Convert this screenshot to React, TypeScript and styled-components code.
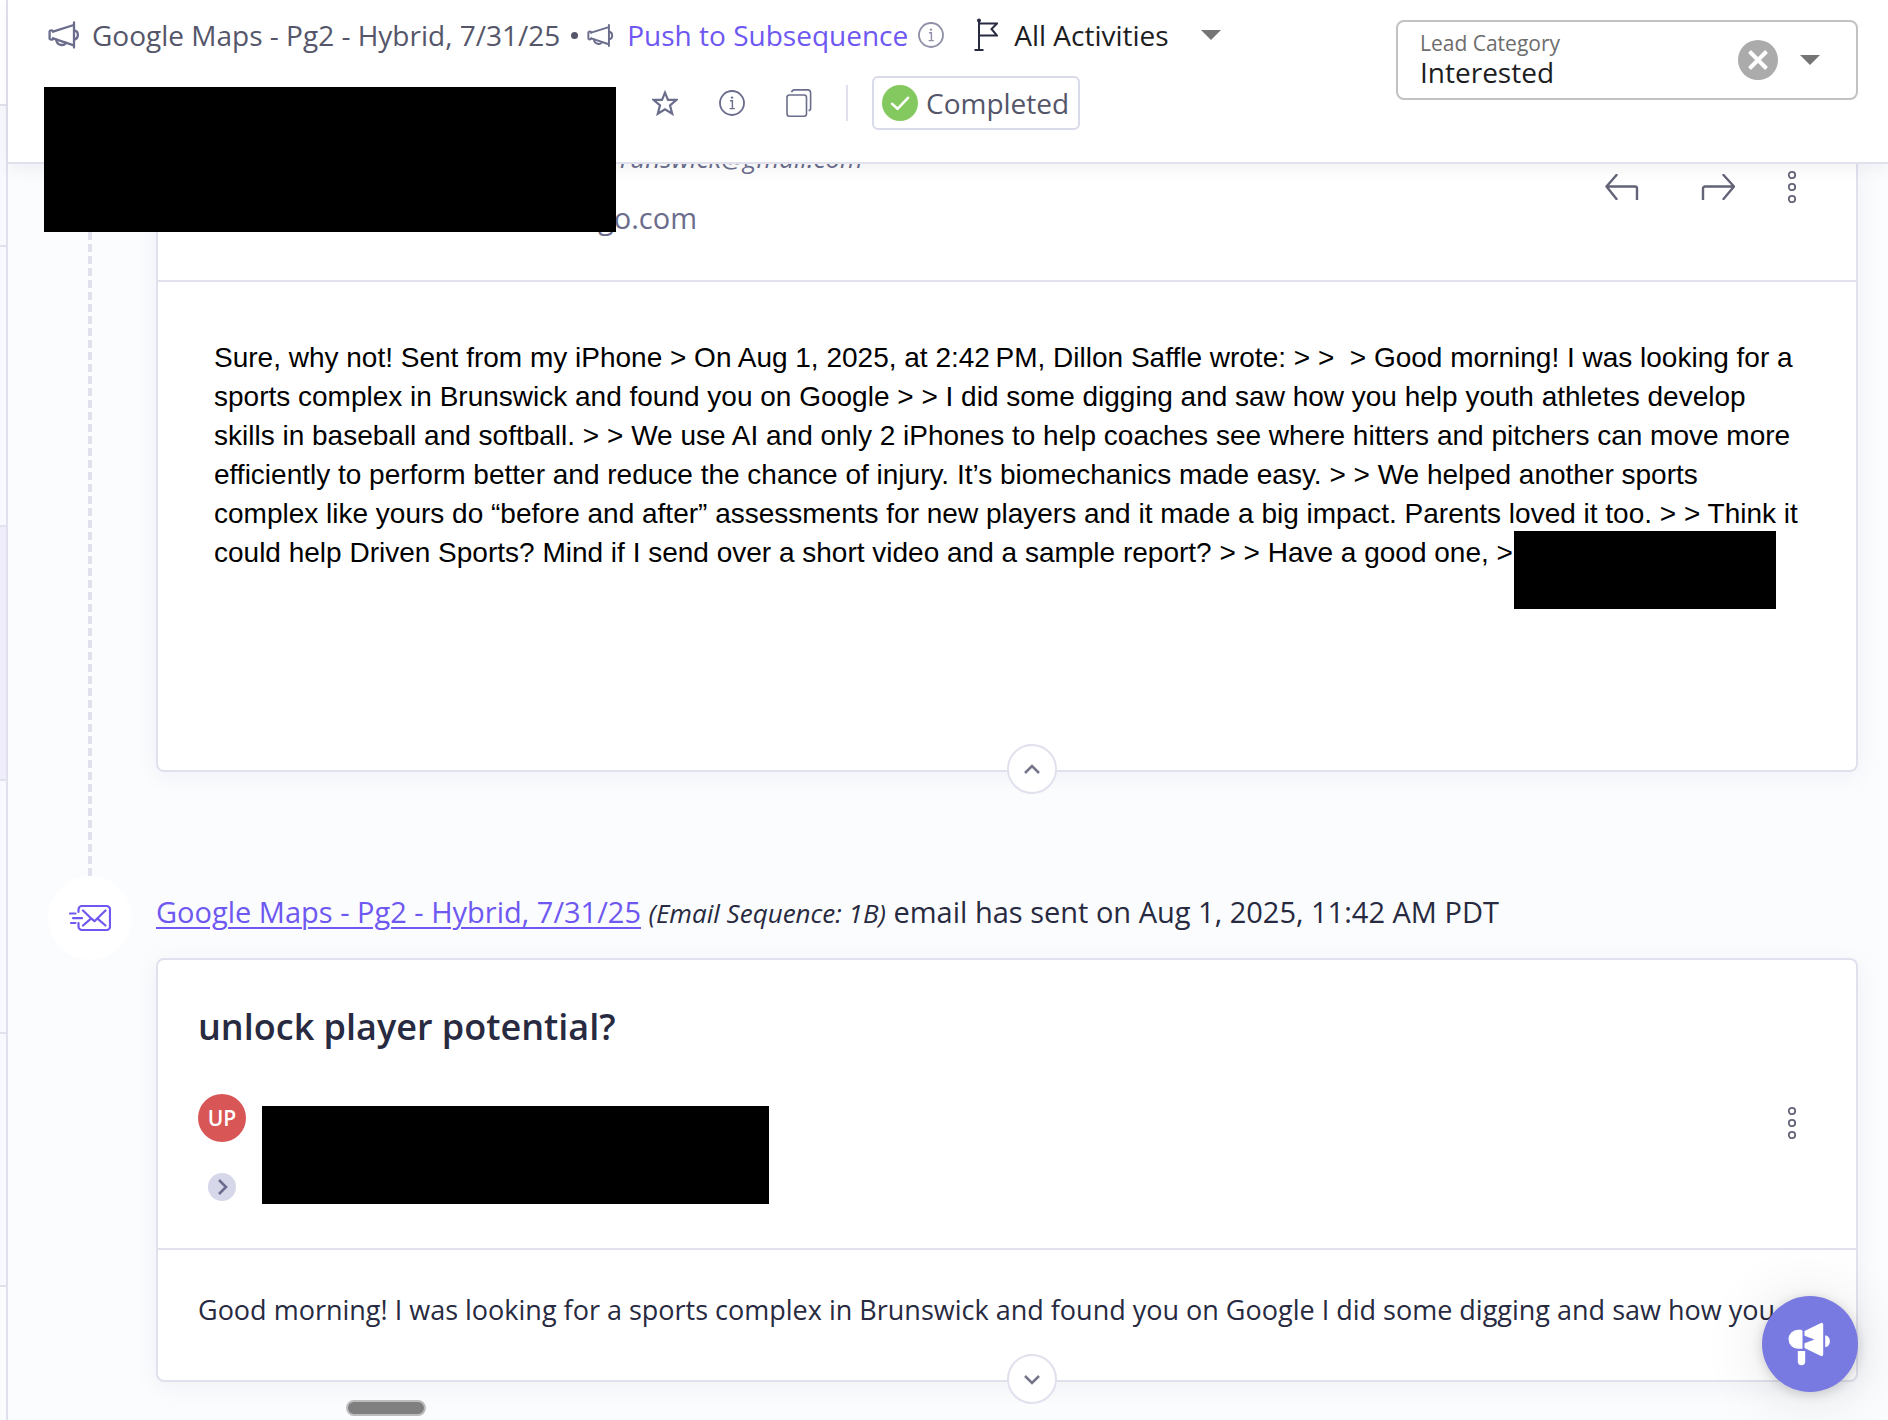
import React from "react";
import styled, { createGlobalStyle } from "styled-components";

const sans = `"Open Sans", "Noto Sans", sans-serif`;
const line = "#e1e1ee";
const ink = "#272a40";
const slate = "#6b6d8c";
const violet = "#6e58f1";

const GlobalStyle = createGlobalStyle`
  *, *::before, *::after { box-sizing: border-box; }
  body { margin: 0; background: #fbfcfe; font-family: ${sans}; color: ${ink}; }
  button, select { font: inherit; color: inherit; margin: 0; padding: 0; border: 0; background: none; }
  button { cursor: pointer; }
  p, h2 { margin: 0; }
  svg { display: block; flex: none; }
`;

const Page = styled.div`
  position: relative;
  display: flex;
  height: 100vh;
  overflow: hidden;
`;

const LeadList = styled.aside`
  flex: none;
  display: flex;
  flex-direction: column;
  width: 8px;
  border-right: 2px solid ${line};
`;

const LeadRow = styled.div<{ $height: number; $tone: string }>`
  flex: none;
  height: ${(p) => p.$height}px;
  background: ${(p) => p.$tone};
  border-bottom: 2px solid ${line};
`;

const Content = styled.div`
  flex: 1;
  min-width: 0;
  display: flex;
  flex-direction: column;
`;

const Header = styled.header`
  position: relative;
  z-index: 1;
  flex: none;
  display: flex;
  justify-content: space-between;
  align-items: flex-start;
  height: 164px;
  padding: 15px 30px 0 40px;
  background: #fff;
  border-bottom: 2px solid ${line};
  box-shadow: 0 6px 16px rgba(20, 20, 40, 0.05);
`;

const HeaderRows = styled.div`
  display: flex;
  flex-direction: column;
  gap: 21px;
`;

const CampaignRow = styled.div`
  display: flex;
  align-items: center;
  height: 40px;
  font-size: 28px;
  line-height: 40px;
  white-space: nowrap;
`;

const CampaignName = styled.span`
  margin-left: 12px;
  color: #55566a;
`;

const Bullet = styled.span`
  width: 7px;
  height: 7px;
  margin: 0 9px 0 11px;
  border-radius: 50%;
  background: #55566a;
`;

const PushLink = styled.a`
  margin: 0 10px 0 13px;
  color: ${violet};
  text-decoration: none;
`;

const ActivityFilter = styled.div`
  display: flex;
  align-items: center;
  margin-left: 30px;
`;

const ActivitySelect = styled.select`
  appearance: none;
  height: 40px;
  margin: 0 32px 0 16px;
  line-height: 40px;
  color: #1d1d1f;
`;

const ActionRow = styled.div`
  display: flex;
  align-items: center;
  justify-content: flex-end;
  align-self: flex-start;
  height: 54px;
  padding-left: 604px;
`;

const IconButton = styled.button<{ $gap?: number }>`
  display: flex;
  align-items: center;
  justify-content: center;
  margin-right: ${(p) => p.$gap ?? 0}px;
`;

const Divider = styled.span`
  width: 2px;
  height: 36px;
  margin-right: 24px;
  background: ${line};
`;

const StatusButton = styled.button`
  display: flex;
  align-items: center;
  gap: 8px;
  height: 54px;
  padding: 0 9px 0 8px;
  border: 2px solid #d9dbeb;
  border-radius: 6px;
  color: #55566a;
  font-size: 28px;
  line-height: 40px;
`;

const CategoryField = styled.div`
  display: flex;
  align-items: center;
  width: 462px;
  height: 80px;
  margin-top: 5px;
  padding: 0 36px 0 22px;
  border: 2px solid #c2c2c2;
  border-radius: 8px;
`;

const CategoryText = styled.div`
  flex: 1;
  display: flex;
  flex-direction: column;
  align-items: flex-start;
  padding-bottom: 2px;
`;

const CategoryLabel = styled.label`
  font-size: 21px;
  line-height: 26px;
  color: #6d6d6d;
`;

const CategorySelect = styled.select`
  appearance: none;
  height: 32px;
  font-size: 28px;
  line-height: 32px;
  color: #1d1d1f;
`;

const Thread = styled.main`
  flex: 1;
  min-height: 0;
  overflow: hidden;
  padding-right: 30px;
`;

const Entry = styled.article`
  display: grid;
  grid-template-columns: 84px minmax(0, 1fr);
  column-gap: 24px;
  padding-left: 40px;
`;

const Rail = styled.div`
  display: flex;
  flex-direction: column;
  align-items: center;
`;

const Dashes = styled.span`
  flex: 1;
  width: 4px;
  background: repeating-linear-gradient(to top, ${line} 0 8px, transparent 8px 12px);
`;

const RailBadge = styled.span`
  display: flex;
  align-items: center;
  justify-content: center;
  width: 84px;
  height: 84px;
  border-radius: 50%;
  background: #fff;
`;

const Card = styled.section`
  background: #fff;
  border: 2px solid ${line};
  border-radius: 8px;
  box-shadow: 0 4px 24px rgba(30, 35, 70, 0.05);
`;

const ScrolledCard = styled(Card)`
  border-top: 0;
  border-top-left-radius: 0;
  border-top-right-radius: 0;
  margin-bottom: 104px;
`;

const SenderBar = styled.div`
  display: flex;
  justify-content: space-between;
  height: 118px;
  padding-right: 59px;
  border-bottom: 2px solid ${line};
  color: ${slate};
`;

const Addresses = styled.div`
  display: flex;
  flex-direction: column;
  gap: 26px;
  margin-top: -22px;
  padding-left: 440px;
`;

const FromAddress = styled.em`
  padding-left: 22px;
  font-size: 26px;
  line-height: 32px;
`;

const ToAddress = styled.span`
  font-size: 29px;
  line-height: 36px;
`;

const MessageActions = styled.div`
  display: flex;
  align-items: center;
  height: 46px;
`;

const Message = styled.div`
  position: relative;
  min-height: 462px;
  padding: 56px 50px 0 56px;
  color: #000;
  font-family: "Liberation Sans", Arial, sans-serif;
  font-size: 28px;
  line-height: 39px;
  white-space: nowrap;
`;

const Redaction = styled.span<{ $w: number; $h: number }>`
  display: block;
  width: ${(p) => p.$w}px;
  height: ${(p) => p.$h}px;
  background: #000;
`;

const LeadRedaction = styled(Redaction)`
  position: absolute;
  z-index: 2;
  top: 87px;
  left: 44px;
`;

const SignatureRedaction = styled(Redaction)`
  position: absolute;
  top: 249px;
  right: 80px;
`;

const ToggleRow = styled.div`
  display: flex;
  justify-content: center;
  margin-bottom: -24px;
  padding-left: 50px;
`;

const ToggleButton = styled.button`
  position: relative;
  display: flex;
  align-items: center;
  justify-content: center;
  width: 50px;
  height: 50px;
  border: 2px solid ${line};
  border-radius: 50%;
  background: #fff;
`;

const EntryTitle = styled.p`
  margin: 16px 0 25px;
  font-size: 29px;
  line-height: 39px;
  white-space: nowrap;
`;

const CampaignLink = styled.a`
  color: ${violet};
  text-decoration: underline;
  text-decoration-thickness: 2px;
  text-underline-offset: 4px;
`;

const SequenceNote = styled.em`
  font-size: 26px;
`;

const Subject = styled.h2`
  padding: 44px 40px 0;
  font-size: 36px;
  font-weight: 600;
  line-height: 46px;
`;

const Participants = styled.div`
  display: flex;
  align-items: flex-start;
  height: 200px;
  padding: 44px 59px 0 40px;
  border-bottom: 2px solid ${line};
`;

const AvatarColumn = styled.div`
  display: flex;
  flex-direction: column;
  align-items: center;
  gap: 31px;
  margin-right: 16px;
`;

const Avatar = styled.span`
  display: flex;
  align-items: center;
  justify-content: center;
  width: 48px;
  height: 48px;
  border-radius: 50%;
  background: #d95657;
  color: #fff;
  font-size: 21px;
  font-weight: 600;
`;

const ExpandButton = styled.button`
  display: flex;
  align-items: center;
  justify-content: center;
  width: 28px;
  height: 28px;
  border-radius: 50%;
  background: #d6d7e9;
`;

const ParticipantDetails = styled.div`
  flex: 1;
  display: flex;
  align-items: flex-start;
  justify-content: space-between;
  margin-top: 12px;
`;

const Preview = styled.p`
  height: 104px;
  padding: 40px 40px 0;
  font-size: 27px;
  line-height: 40px;
  white-space: nowrap;
`;

const ScrollThumb = styled.span`
  position: absolute;
  left: 346px;
  bottom: 4px;
  width: 80px;
  height: 16px;
  border: 2px solid #bdbdbf;
  border-radius: 8px;
  background: #7f7f80;
`;

const NewsButton = styled.button`
  position: absolute;
  z-index: 2;
  right: 30px;
  bottom: 28px;
  display: flex;
  align-items: center;
  justify-content: center;
  width: 96px;
  height: 96px;
  border-radius: 50%;
  background: #787ae2;
  box-shadow: 0 2px 12px rgba(0, 0, 0, 0.16), 0 4px 64px rgba(0, 0, 0, 0.12);
`;

const Megaphone = ({ size = 32 }: { size?: number }) => (
  <svg width={size} height={size} viewBox="0 0 32 32" fill="none" stroke={slate} strokeWidth="2.3" strokeLinejoin="round" strokeLinecap="round">
    <path d="M5 12.6 25.8 6M5 19.4 25.8 26.4M26 3.5v25" />
    <path d="M5 12.6c0-1.5-3.4-1.8-3.4 0v6.8c0 1.8 3.4 1.5 3.4 0" />
    <path d="M26.4 11.5c4.6.8 4.6 8.2 0 9" />
    <path d="M8.2 20.6c.6 6.2 8 6.6 9.6 3.2" />
  </svg>
);

const Info = ({ color }: { color: string }) => (
  <svg width="26" height="26" viewBox="0 0 26 26" fill="none" stroke={color} strokeWidth="1.8">
    <circle cx="13" cy="13" r="12" />
    <path d="M11 10.8h2.4v7.6M10.6 18.6h5.2" strokeWidth="1.4" />
    <circle cx="13" cy="7.6" r="1.2" fill={color} stroke="none" />
  </svg>
);

const Flag = () => (
  <svg width="24" height="34" viewBox="0 0 24 34" fill="none" stroke={ink} strokeWidth="2">
    <path d="M5 2v30M.5 32h9M5 5.5h18l-5.5 5.5 5.5 6.5H5" />
    <circle cx="5" cy="2.4" r="2" fill={ink} stroke="none" />
  </svg>
);

const Caret = () => (
  <svg width="20" height="10" viewBox="0 0 20 10" fill="#757575">
    <path d="M0 0h20L10 10z" />
  </svg>
);

const Star = () => (
  <svg width="26" height="26" viewBox="0 0 26 26" fill="none" stroke={slate} strokeWidth="2.2">
    <path d="m13 2.6 3 7.2h8.4l-6.4 5.5 2.2 8.4L13 19.2l-7.2 4.5L8 15.3 1.6 9.8H10z" />
  </svg>
);

const Copy = () => (
  <svg width="26" height="28" viewBox="0 0 26 28" fill="none" stroke={slate} strokeWidth="1.6">
    <rect x="1" y="6" width="19.5" height="21.2" rx="2.5" />
    <path d="M5.6 3.2C6 1.6 7 .9 8.4.9h13.2a3 3 0 0 1 3 3v15.5c0 1.3-.8 2-2 2" />
  </svg>
);

const Check = () => (
  <svg width="36" height="36" viewBox="0 0 36 36">
    <circle cx="18" cy="18" r="18" fill="#84c95f" />
    <path d="m10 18.8 5.5 5 10.5-11" fill="none" stroke="#fff" strokeWidth="2.6" strokeLinecap="round" strokeLinejoin="round" />
  </svg>
);

const Clear = () => (
  <svg width="40" height="40" viewBox="0 0 40 40">
    <circle cx="20" cy="20" r="20" fill="#ababab" />
    <path d="m11.5 11.5 17 17m0-17-17 17" stroke="#fff" strokeWidth="4" />
  </svg>
);

const Reply = ({ flip = false }: { flip?: boolean }) => (
  <svg width="34" height="26" viewBox="0 0 34 26" fill="none" stroke="#626377" strokeWidth="2.4" strokeLinecap="round" strokeLinejoin="round">
    <path
      d={
        flip
          ? "M2 26V14.5a2 2 0 0 1 2-2h28.5M22.5 1 33 12.5 22.5 25"
          : "M32 26V14.5a2 2 0 0 0-2-2H1.5M11.5 1 1.5 12.5 11.5 25"
      }
    />
  </svg>
);

const Dots = () => (
  <svg width="10" height="34" viewBox="0 0 10 34" fill="none" stroke="#626377" strokeWidth="1.8">
    <circle cx="5" cy="5" r="3.2" />
    <circle cx="5" cy="17" r="3.2" />
    <circle cx="5" cy="29" r="3.2" />
  </svg>
);

const Chevron = ({ d, color }: { d: string; color: string }) => (
  <svg width="20" height="20" viewBox="0 0 20 20" fill="none" stroke={color} strokeWidth="2.6">
    <path d={d} />
  </svg>
);

const SentMail = () => (
  <svg width="42" height="26" viewBox="0 0 42 26" fill="none" stroke={violet} strokeWidth="2.2" strokeLinecap="round" strokeLinejoin="round">
    <path d="M9.5 7V4.5A3.5 3.5 0 0 1 13 1h24.500A3.500 3.500 0 0 1 41 4.500v17a3.500 3.500 0 0 1-3.500 3.500H13a3.500 3.500 0 0 1-3.500-3.500V18" />
    <path d="m14 5.500 8.500 8.200 3 2.500 2.500-2.500 8.500-8.200M14 20.500l8-6.800M36.500 20.500l-8-6.800M1 8.500h5.500M4 13.200h9M2 18h4.500" />
  </svg>
);

const News = () => (
  <svg width="44" height="44" viewBox="0 0 44 44" fill="#fff">
    <path d="M14.500 7.800v19H10a9.500 9.500 0 0 1 0-19h3a1.500 1.500 0 0 1 1.500 1.500z" />
    <path d="M16.500 9 33 1a1.600 1.600 0 0 1 2.200 1.500v30A1.600 1.600 0 0 1 33 34l-16.500-8v-4.800l10-3.700-10-3.700z" />
    <path d="M37.200 13.200a6.200 6.200 0 0 1 0 12z" />
    <path d="M9.800 29h7.400v10.500a3.700 3.700 0 0 1-7.400 0z" />
  </svg>
);

const leadRows = [
  { height: 106, tone: "#ffffff" },
  { height: 141, tone: "#f8f9ff" },
  { height: 280, tone: "#f8f9ff" },
  { height: 254, tone: "#efecfc" },
  { height: 253, tone: "#f8f9ff" },
  { height: 253, tone: "#f8f9ff" },
];

export default function App() {
  return (
    <Page>
      <GlobalStyle />
      <LeadList>
        {leadRows.map((row, i) => (
          <LeadRow key={i} $height={row.height} $tone={row.tone} />
        ))}
      </LeadList>
      <Content>
        <Header>
          <HeaderRows>
            <CampaignRow>
              <Megaphone />
              <CampaignName>Google Maps - Pg2 - Hybrid, 7/31/25</CampaignName>
              <Bullet />
              <Megaphone size={27} />
              <PushLink href="#subsequence">Push to Subsequence</PushLink>
              <Info color="#8f90a8" />
              <ActivityFilter>
                <Flag />
                <ActivitySelect aria-label="Activities" defaultValue="all">
                  <option value="all">All Activities</option>
                </ActivitySelect>
                <Caret />
              </ActivityFilter>
            </CampaignRow>
            <ActionRow>
              <IconButton aria-label="Star" $gap={41}><Star /></IconButton>
              <IconButton aria-label="Details" $gap={41}><Info color={slate} /></IconButton>
              <IconButton aria-label="Copy" $gap={34}><Copy /></IconButton>
              <Divider />
              <StatusButton>
                <Check />
                Completed
              </StatusButton>
            </ActionRow>
          </HeaderRows>
          <CategoryField>
            <CategoryText>
              <CategoryLabel htmlFor="category">Lead Category</CategoryLabel>
              <CategorySelect id="category" defaultValue="interested">
                <option value="interested">Interested</option>
              </CategorySelect>
            </CategoryText>
            <IconButton aria-label="Clear category" $gap={22}><Clear /></IconButton>
            <Caret />
          </CategoryField>
        </Header>

        <Thread>
          <Entry>
            <Rail><Dashes /></Rail>
            <ScrolledCard>
              <SenderBar>
                <Addresses>
                  <FromAddress>runswick@gmail.com</FromAddress>
                  <ToAddress>go.com</ToAddress>
                </Addresses>
                <MessageActions>
                  <IconButton aria-label="Reply" $gap={62}><Reply /></IconButton>
                  <IconButton aria-label="Forward" $gap={52}><Reply flip /></IconButton>
                  <IconButton aria-label="More"><Dots /></IconButton>
                </MessageActions>
              </SenderBar>
              <Message>
                <p>
                  Sure, why not! Sent from my iPhone &gt; On Aug 1, 2025, at 2:42&#8239;PM, Dillon Saffle wrote: &gt; &gt; &nbsp;&gt; Good morning! I was looking for a<br />
                  sports complex in Brunswick and found you on Google &gt; &gt; I did some digging and saw how you help youth athletes develop<br />
                  skills in baseball and softball. &gt; &gt; We use AI and only 2 iPhones to help coaches see where hitters and pitchers can move more<br />
                  efficiently to perform better and reduce the chance of injury. It’s biomechanics made easy. &gt; &gt; We helped another sports<br />
                  complex like yours do “before and after” assessments for new players and it made a big impact. Parents loved it too. &gt; &gt; Think it<br />
                  could help Driven Sports? Mind if I send over a short video and a sample report? &gt; &gt; Have a good one, &gt;
                </p>
                <SignatureRedaction $w={262} $h={78} />
              </Message>
              <ToggleRow>
                <ToggleButton aria-label="Collapse message">
                  <Chevron d="m3 14 7-7 7 7" color="#75768c" />
                </ToggleButton>
              </ToggleRow>
            </ScrolledCard>
          </Entry>

          <Entry>
            <Rail>
              <RailBadge><SentMail /></RailBadge>
            </Rail>
            <div>
              <EntryTitle>
                <CampaignLink href="#campaign">Google Maps - Pg2 - Hybrid, 7/31/25</CampaignLink>{" "}
                <SequenceNote>(Email Sequence: 1B)</SequenceNote> email has sent on Aug 1, 2025, 11:42 AM PDT
              </EntryTitle>
              <Card>
                <Subject>unlock player potential?</Subject>
                <Participants>
                  <AvatarColumn>
                    <Avatar>UP</Avatar>
                    <ExpandButton aria-label="Show recipients">
                      <Chevron d="m7 3 7 7-7 7" color={slate} />
                    </ExpandButton>
                  </AvatarColumn>
                  <ParticipantDetails>
                    <Redaction $w={507} $h={98} />
                    <IconButton aria-label="More"><Dots /></IconButton>
                  </ParticipantDetails>
                </Participants>
                <Preview>
                  Good morning! I was looking for a sports complex in Brunswick and found you on Google I did some digging and saw how you…
                </Preview>
                <ToggleRow>
                  <ToggleButton aria-label="Expand message">
                    <Chevron d="m3 7 7 7 7-7" color="#75768c" />
                  </ToggleButton>
                </ToggleRow>
              </Card>
            </div>
          </Entry>
        </Thread>
      </Content>
      <LeadRedaction $w={572} $h={145} />
      <ScrollThumb />
      <NewsButton aria-label="What's new"><News /></NewsButton>
    </Page>
  );
}
